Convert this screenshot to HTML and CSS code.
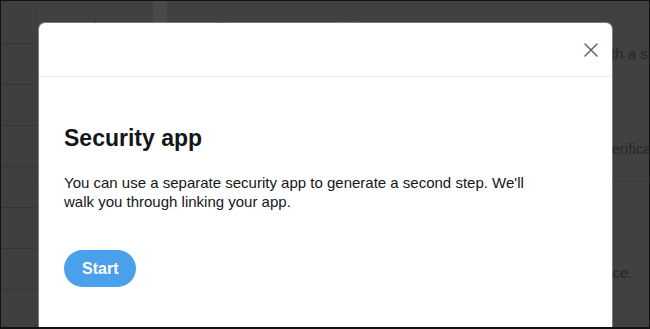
FILE: index.html
```html
<!DOCTYPE html>
<html lang="en">
<head>
    <meta charset="UTF-8">
    <meta name="viewport" content="width=device-width, initial-scale=1.0">
    <title>Security app</title>
    <link rel="stylesheet" href="styles.css">
</head>
<body>
    <div class="page">
        <nav class="side">
            <div class="side-row"></div>
            <div class="side-row"></div>
            <div class="side-row"></div>
            <div class="side-row"></div>
            <div class="side-row"></div>
            <div class="side-row"></div>
            <div class="side-row"></div>
            <div class="side-row"></div>
        </nav>
        <div class="main">
            <div class="strip"></div>
            <div class="bg-head">
                <span class="bg-mark">\</span>
                <span class="bg-title">Text message</span>
                <span class="bg-link">Edit</span>
            </div>
            <div class="bg-row row-one"><span>with a six-digit code.</span></div>
            <div class="bg-row row-two"><span>verification code</span></div>
            <div class="bg-row row-three"><span>device.</span></div>
        </div>

        <div class="modal">
            <div class="modal-header">
                <button class="close" aria-label="Close">
                    <svg width="14" height="14" viewBox="0 0 14 14">
                        <path d="M1 1 L13 13 M13 1 L1 13" stroke="#5b6b78" stroke-width="1.6" fill="none" stroke-linecap="round"/>
                    </svg>
                </button>
            </div>
            <div class="modal-body">
                <h1>Security app</h1>
                <p>You can use a separate security app to generate a second step. We'll walk you through linking your app.</p>
                <button class="start">Start</button>
            </div>
        </div>
    </div>
</body>
</html>
```

FILE: styles.css
```css
body {
    margin: 0;
    font-family: "Liberation Sans", Arial, Helvetica, sans-serif;
    background-color: #111;
}
.page {
    position: relative;
    display: flex;
    height: 329px;
    box-sizing: border-box;
    border: 1px solid #121212;
    border-bottom-width: 2px;
    background: #414141;
    overflow: hidden;
}
.side {
    width: 37px;
    flex-shrink: 0;
    background: #3f3f3f;
}
.side-row {
    height: 40px;
    border-bottom: 1px solid #363636;
}
.side-row:first-child {
    height: 42px;
}
.main {
    position: relative;
    flex: 1;
    color: #272727;
    font-size: 15px;
    line-height: 20px;
    white-space: nowrap;
}
.strip {
    position: absolute;
    left: 115px;
    top: 0;
    width: 14px;
    height: 22px;
    background: #4a4a4a;
}
.bg-head {
    height: 27px;
    padding-top: 16px;
    display: flex;
}
.bg-mark {
    margin-left: 56px;
    color: #222;
}
.bg-title {
    margin-left: 118px;
}
.bg-link {
    margin-left: 28px;
    color: #2b5a86;
}
.bg-row span {
    display: block;
}
.row-one {
    height: 95px;
    padding-left: 559px;
}
.row-two {
    height: 42px;
    padding-left: 566px;
    border-bottom: 1px solid #393939;
}
.row-three {
    padding-top: 81px;
    padding-left: 547px;
}
.modal {
    position: absolute;
    top: 22px;
    left: 38px;
    width: 573px;
    height: 330px;
    background: #fff;
    border-radius: 6px;
    box-shadow: 0 0 0 1px rgba(255, 255, 255, 0.3);
}
.modal-header {
    height: 53px;
    display: flex;
    align-items: center;
    justify-content: flex-end;
    padding-right: 14px;
    border-bottom: 1px solid #e4eaef;
}
.close {
    background: none;
    border: none;
    padding: 0;
    width: 14px;
    height: 14px;
    cursor: pointer;
    display: flex;
}
.modal-body {
    padding: 47px 25px 0;
    color: #14171a;
}
h1 {
    margin: 0;
    font-size: 23px;
    line-height: 28px;
    font-weight: bold;
}
p {
    margin: 21px 0 0;
    max-width: 480px;
    font-size: 15px;
    line-height: 19px;
}
.start {
    margin-top: 39px;
    height: 37px;
    padding: 0 18px;
    border: none;
    border-radius: 19px;
    background: #4aa0eb;
    color: white;
    font-family: inherit;
    font-size: 16px;
    font-weight: bold;
    cursor: pointer;
}
```
